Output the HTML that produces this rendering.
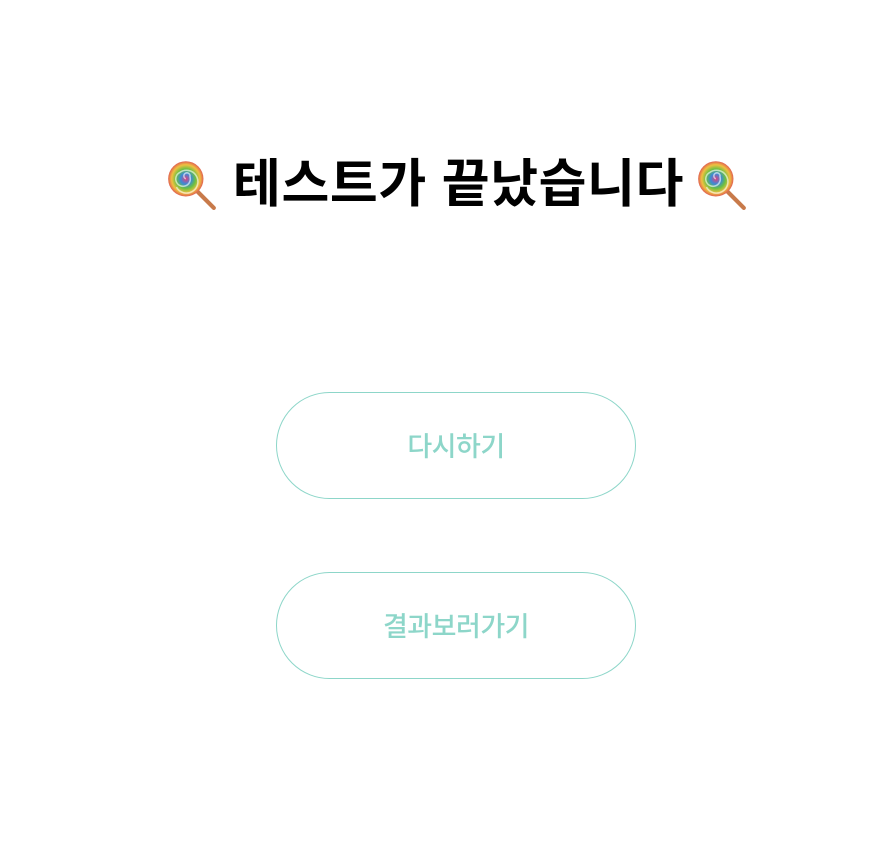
<!DOCTYPE html>
<html><head><meta charset="utf-8"><style>
html,body{margin:0;padding:0;background:#fff;width:888px;height:868px;overflow:hidden;font-family:"Liberation Sans","Noto Sans CJK KR",sans-serif}
.t{position:absolute;left:233px;top:150px;font-size:52px;font-weight:700;color:#000;letter-spacing:0.6px;line-height:70px;white-space:nowrap}
.e{position:absolute;top:156px}
.btn{position:absolute;left:276px;width:358px;height:105px;border:1px solid #8dd6c9;border-radius:54px;display:flex;align-items:center;justify-content:center;color:#8dd6c9;font-size:27px;font-weight:500;letter-spacing:-0.5px;padding-bottom:2px;box-sizing:content-box}
</style></head><body>
<svg width="0" height="0" style="position:absolute"><defs><radialGradient id="g" cx="50%" cy="50%" r="50%"><stop offset="0" stop-color="#e04080"/><stop offset="0.3" stop-color="#3a8ad8"/><stop offset="0.55" stop-color="#6cc040"/><stop offset="0.8" stop-color="#f0c040"/><stop offset="1" stop-color="#e06050"/></radialGradient></defs></svg>
<svg class="e" style="left:164px" width="54" height="54" viewBox="0 0 52 52"><line x1="28" y1="30" x2="48" y2="50" stroke="#c87a4a" stroke-width="4" stroke-linecap="round"/><circle cx="21" cy="22" r="17" fill="url(#g)"/><path d="M21 22 a3 3 0 1 1 4 -2 a7 7 0 1 1 -10 -4 a11 11 0 1 1 -3 14" fill="none" stroke="#fff" stroke-width="1.5" opacity=".6"/></svg>
<div class="t">테스트가 끝났습니다</div>
<svg class="e" style="left:694px" width="54" height="54" viewBox="0 0 52 52"><line x1="28" y1="30" x2="48" y2="50" stroke="#c87a4a" stroke-width="4" stroke-linecap="round"/><circle cx="21" cy="22" r="17" fill="url(#g)"/><path d="M21 22 a3 3 0 1 1 4 -2 a7 7 0 1 1 -10 -4 a11 11 0 1 1 -3 14" fill="none" stroke="#fff" stroke-width="1.5" opacity=".6"/></svg>
<div class="btn" style="top:392px;height:103px">다시하기</div>
<div class="btn" style="top:572px;height:103px">결과보러가기</div>
</body></html>
